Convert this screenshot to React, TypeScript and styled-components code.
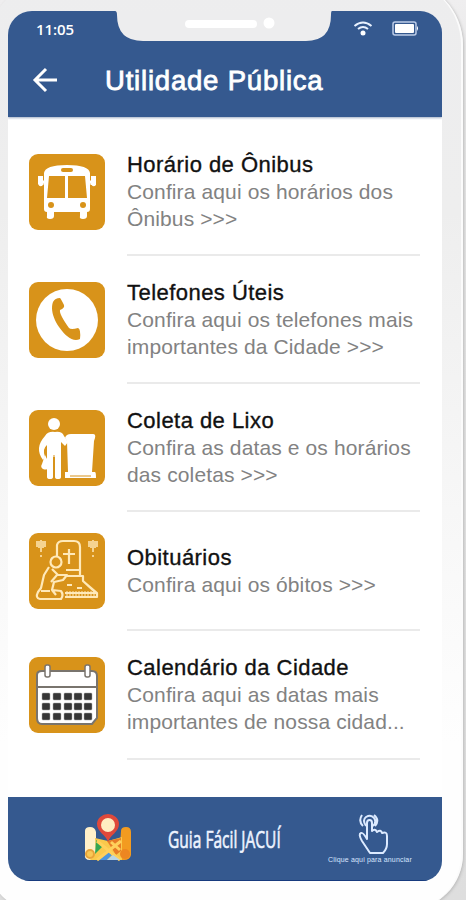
import React from "react";
import styled, { createGlobalStyle } from "styled-components";

const Global = createGlobalStyle`
  * { box-sizing: border-box; }
  body { margin: 0; background: #e3e3e3; overflow: hidden; font-family: "Liberation Sans", Arial, sans-serif; }
`;

const Viewport = styled.main`
  height: 900px;
  width: 466px;
  overflow: hidden;
  background: linear-gradient(#efeeef, #e6e6e6 12%, #dedede);
`;

const Phone = styled.div`
  width: 475px;
  height: 930px;
  margin: -20px 0 0 -12px;
  padding: 31px 20px 0 20px;
  border-right: 2px solid #fbfbfb;
  border-radius: 65px 65px 56px 48px;
  background: linear-gradient(#ededee, #eeeeee 25%, #fefefe 82%);
  box-shadow: 1px 1px 3px #bbb;
`;

const Screen = styled.div`
  width: 434px;
  height: 870px;
  display: flex;
  flex-direction: column;
  overflow: hidden;
  background: #fff;
  border-radius: 24px 22px 20px 22px;
`;

const Header = styled.header`
  position: relative;
  height: 106px;
  flex: none;
  background: #35598f;
  box-shadow: 0 1px 2px #18376d66;
  color: #fff;
`;

const Notch = styled.svg`
  position: absolute;
  left: 107px;
  top: 0;
`;

const StatusBar = styled.div`
  height: 35px;
  padding: 9px 24px 0 28px;
  display: flex;
  justify-content: space-between;
`;

const Clock = styled.time`
  font: 600 15px/18px "Open Sans", sans-serif;
  letter-spacing: -0.1px;
`;

const StatusIcons = styled.div`
  display: flex;
  gap: 19px;
`;

const TitleBar = styled.div`
  height: 69px;
  display: flex;
  align-items: center;
  padding-left: 23px;
  gap: 46px;
`;

const Title = styled.h1`
  margin: 0;
  padding-top: 1px;
  font-size: 27.5px;
  font-weight: 400;
  line-height: 34px;
  letter-spacing: 0.8px;
  white-space: nowrap;
  -webkit-text-stroke: 0.8px #fff;
`;

const List = styled.ul`
  list-style: none;
  margin: 0;
  padding: 10px 20px 0 21px;
  flex: 1;
`;

const Row = styled.li<{ $height: number; $lift: number }>`
  height: ${(p) => p.$height}px;
  display: grid;
  grid-template-columns: 76px 293px;
  column-gap: 22px;
  align-items: center;

  > svg {
    margin-bottom: ${(p) => p.$lift}px;
  }
`;

const Copy = styled.div<{ $lift: number }>`
  height: 100%;
  display: flex;
  flex-direction: column;
  justify-content: center;
  padding-bottom: ${(p) => p.$lift}px;
  border-bottom: 2px solid #eaeaea;
  white-space: nowrap;
`;

const Name = styled.h2`
  margin: 0;
  padding-top: 1px;
  height: 29px;
  font-size: 22px;
  font-weight: 400;
  line-height: 29px;
  letter-spacing: 0.46px;
  color: #111;
  -webkit-text-stroke: 0.35px #111;
`;

const Line = styled.p`
  margin: 0;
  font-size: 21px;
  line-height: 27px;
  letter-spacing: 0.12px;
  color: #828282;
`;

const Footer = styled.footer`
  height: 84px;
  flex: none;
  background: #35598f;
  border-bottom: 1px solid #173b7e;
  display: grid;
  grid-template-columns: 76px 84px 159px 1fr;
  align-items: center;
`;

const MapCell = styled.div`
  grid-column: 2;
  height: 52px;
`;

const Brand = styled.strong`
  justify-self: start;
  width: 113px;
  font: 400 23px/32px "Open Sans", sans-serif;
  color: #eef4ff;
  white-space: nowrap;

  span {
    display: inline-block;
    transform: scaleX(0.675);
    transform-origin: left;
    -webkit-text-stroke: 0.6px #eef4ff;
  }
`;

const Advertise = styled.div`
  display: flex;
  flex-direction: column;
  align-items: center;
  width: 86px;
  font-size: 7px;
  line-height: 9px;
  letter-spacing: 0.16px;
  color: #d7e6ff;
  white-space: nowrap;

  svg {
    margin-left: 8px;
  }
`;

const gold = "#d8931a";

const Tile = ({ children }: { children: React.ReactNode }) => (
  <svg width="76" height="76" viewBox="0 0 76 76" display="block">
    <rect width="76" height="76" rx="9" fill={gold} />
    {children}
  </svg>
);

const BusIcon = () => (
  <Tile>
    <path d="M15 22V19Q16 11 38 11T61 19V55Q61 58 58 58V62Q58 65 54 65T51 62V58H25V62Q25 65 21 65T18 62V58Q15 58 15 55Z" fill="#fff" />
    <path d="M16 28H13V31M60 28H63V31" stroke="#fff" strokeWidth="3" fill="none" />
    <path d="M9 22H14V31Q11 34 9 30ZM62 22H67V31Q64 34 62 30Z" fill="#fff" />
    <rect x="32" y="14" width="12" height="4" rx="2" fill={gold} />
    <path d="M20 22H36V44H18ZM39 22H56L58 44H39Z" fill={gold} />
    <circle cx="22" cy="51" r="3" fill={gold} /><circle cx="54" cy="51" r="3" fill={gold} />
  </Tile>
);

const PhoneIcon = () => (
  <Tile>
    <circle cx="38" cy="38" r="31" fill="#fff" />
    <path d="M24 20Q26 16 31 16Q32 17 35 23Q36 26 31 28Q30 32 40 46Q42 48 49 46Q52 47 51 57Q45 60 38 54C29 46 20 31 24 20Z" fill={gold} />
  </Tile>
);

const WasteIcon = () => (
  <Tile>
    <circle cx="25" cy="14" r="6" fill="#fff" />
    <path d="M16 26Q19 21 26 22Q33 21 35 26L39 32L36 36L32 32V67Q32 69 29 69T26 67V47H24V67Q24 69 21 69T18 67V35Q13 39 16 47L14 50Q5 38 16 26Z" fill="#fff" />
    <path d="M16 45L21 55Q20 61 14 59Q11 57 13 54ZM36 28Q37 24 42 24H64Q67 24 66 28L65 31L63 62H66Q67 62 67 68H36V62H39L38 31Z" fill="#fff" />
    <path d="M25 45V67M41 66H62" stroke={gold} strokeWidth="1" />
  </Tile>
);

const ObituaryIcon = () => (
  <Tile>
    <g fill="none" stroke="#ffe9b9" strokeWidth="2.2" strokeLinejoin="round">
      <path d="M28 23V12Q29 8 34 8H45Q51 8 51 14V43M40 16V31M34 21H46M37 37H51M38 43H54V48L68 60V64H36M54 48L67 60H36M38 52H43M48 55H53" />
      <circle cx="27" cy="29" r="5.5" />
      <path d="M20 34L15 42L12 55L9 59Q6 65 11 66H32Q35 62 32 58L23 57L25 49L34 47L38 42L28 42L22 49M29 42L23 36M23 57L27 62M12 58H21" />
      <path d="M8 8V14M10 8V15M12 7V19M14 8V15M16 8V14M60 8V14M62 8V15M64 7V19M66 8V15M68 8V14M12 22V24M64 22V24" strokeWidth="1.5" />
      <path d="M38 58V64M41 58V64M44 58V64M47 58V64M50 58V64M53 58V64M56 58V64M59 58V64M62 58V64M65 58V64" strokeWidth="1" />
    </g>
  </Tile>
);

const CalendarIcon = () => (
  <Tile>
    <path d="M8 18Q8 14 13 14H63Q68 14 68 19V61L63 67H13Q8 67 8 61Z" fill="white" stroke="#79746d" strokeWidth="2" />
    <path d="M9 30H68" stroke="#79746d" strokeWidth="2" />
    <g fill="#fff" stroke="#79746d" strokeWidth="1.5"><rect x="16" y="8" width="5" height="12" rx="2" /><rect x="56" y="8" width="5" height="12" rx="2" /></g>
    {[36, 46, 56].flatMap((y) => [13, 24, 35, 45, 55].map((x) => <rect key={`${x}-${y}`} x={x} y={y} width="8" height="7" rx="1" fill="#363636" stroke="#a4a4a4" strokeWidth=".5" />))}
  </Tile>
);

const WifiIcon = () => (
  <svg width="20" height="18" viewBox="0 0 20 18">
    <g fill="none" stroke="#e8f1ff" strokeWidth="2"><path d="M1.5 6Q10-1 18.5 6M5 9Q10 5 15 9" /></g><circle cx="10" cy="13" r="2.5" fill="white" />
  </svg>
);

const BatteryIcon = () => (
  <svg width="26" height="18" viewBox="1 0 26 18"><rect x="2" y="2" width="23" height="13" rx="2" fill="none" stroke="#bdcde9" strokeWidth="1.5" /><rect x="4" y="4" width="19" height="9" rx="1" fill="#fff" /><path d="M26 6Q28 8 26 11" fill="#fff" /></svg>
);

const MapIcon = () => (
  <svg width="48" height="50" viewBox="0 0 48 50" display="block">
    <path d="M1 18Q1 14 6 14T12 19V41Q12 47 6 47T1 41Z" fill="#fff0c9" />
    <path d="M37 18Q37 14 42 14T47 19V42Q46 47 40 47H35Z" fill="#f39b20" />
    <path d="M11 25L24 28L38 24V47H6L12 39Z" fill="#f9c94c" />
    <path d="M12 27L19 33L11 41Z" fill="#33a753" />
    <path d="M14 47L23 37L28 42L23 47Z" fill="#4a95df" />
    <path d="M23 28L37 25V38L32 42Z" fill="#e77c26" />
    <path d="M13 28L36 47M37 28L13 47M27 29L36 37" stroke="#ffd05b" strokeWidth="3" />
    <path d="M29 42L36 47H23Z" fill="#b8d5e5" />
    <circle cx="6" cy="41" r="4" fill="#f9c855" stroke="#e7a33a" strokeWidth="2" /><circle cx="41" cy="41" r="5" fill="#ed8621" />
    <path d="M24 29C22 22 13 19 13 11A11 10 0 0 1 35 11C35 19 26 22 24 29Z" fill="#df493b" /><circle cx="24" cy="12" r="7" fill="#ffedc1" />
  </svg>
);

const TouchIcon = () => (
  <svg width="34" height="42" viewBox="0 0 34 42" display="block" fill="none" stroke="#dceaff" strokeWidth="2" strokeLinejoin="round">
    <path d="M6 13Q1 8 5 2M9 13Q5 7 9 4Q14 1 17 5Q20 9 16 13M17 2Q23 7 18 13" />
    <path d="M10 26V10Q10 7 12.5 7T15 10V18Q18 15 20 19Q24 16 25 20Q30 18 30 23V31Q30 36 26 40H13L5 28Q1 21 4 20Q6 19 10 26Z" />
  </svg>
);

const services = [
  { name: "Horário de Ônibus", lines: ["Confira aqui os horários dos", "Ônibus >>>"], height: 129, iconLift: 0, textLift: 0, icon: <BusIcon /> },
  { name: "Telefones Úteis", lines: ["Confira aqui os telefones mais", "importantes da Cidade >>>"], height: 128, iconLift: 0, textLift: 1, icon: <PhoneIcon /> },
  { name: "Coleta de Lixo", lines: ["Confira as datas e os horários", "das coletas >>>"], height: 128, iconLift: 0, textLift: 1, icon: <WasteIcon /> },
  { name: "Obituários", lines: ["Confira aqui os óbitos >>>"], height: 119, iconLift: 2, textLift: 1, icon: <ObituaryIcon /> },
  { name: "Calendário da Cidade", lines: ["Confira aqui as datas mais", "importantes de nossa cidad..."], height: 129, iconLift: 2, textLift: 2, icon: <CalendarIcon /> },
];

export default function App() {
  return (
    <><Global /><Viewport><Phone><Screen>
      <Header>
        <Notch width="217" height="32" viewBox="0 0 217 32">
          <path d="M0 0Q2 0 2 4Q2 30 28 30H191Q216 30 216 4Q216 0 217 0Z" fill="#ededee" />
          <rect x="70" y="9" width="72" height="8" rx="4" fill="#fff" /><circle cx="154" cy="12" r="5.5" fill="#fff" />
        </Notch>
        <StatusBar><Clock>11:05</Clock><StatusIcons><WifiIcon /><BatteryIcon /></StatusIcons></StatusBar>
        <TitleBar>
          <svg width="28" height="28" viewBox="0 0 28 28" fill="none" stroke="#fff" strokeWidth="3"><path d="M26 13H4M15 2L4 13L15 24" /></svg>
          <Title>Utilidade Pública</Title>
        </TitleBar>
      </Header>
      <List>{services.map((service) => <Row key={service.name} $height={service.height} $lift={service.iconLift}>
        {service.icon}
        <Copy $lift={service.textLift}>
          <Name>{service.name}</Name>
          {service.lines.map((line) => <Line key={line}>{line}</Line>)}
        </Copy>
      </Row>)}</List>
      <Footer><MapCell><MapIcon /></MapCell><Brand><span>Guia Fácil JACUÍ</span></Brand>
        <Advertise><TouchIcon />Clique aqui para anunciar</Advertise>
      </Footer>
    </Screen></Phone></Viewport></>
  );
}
